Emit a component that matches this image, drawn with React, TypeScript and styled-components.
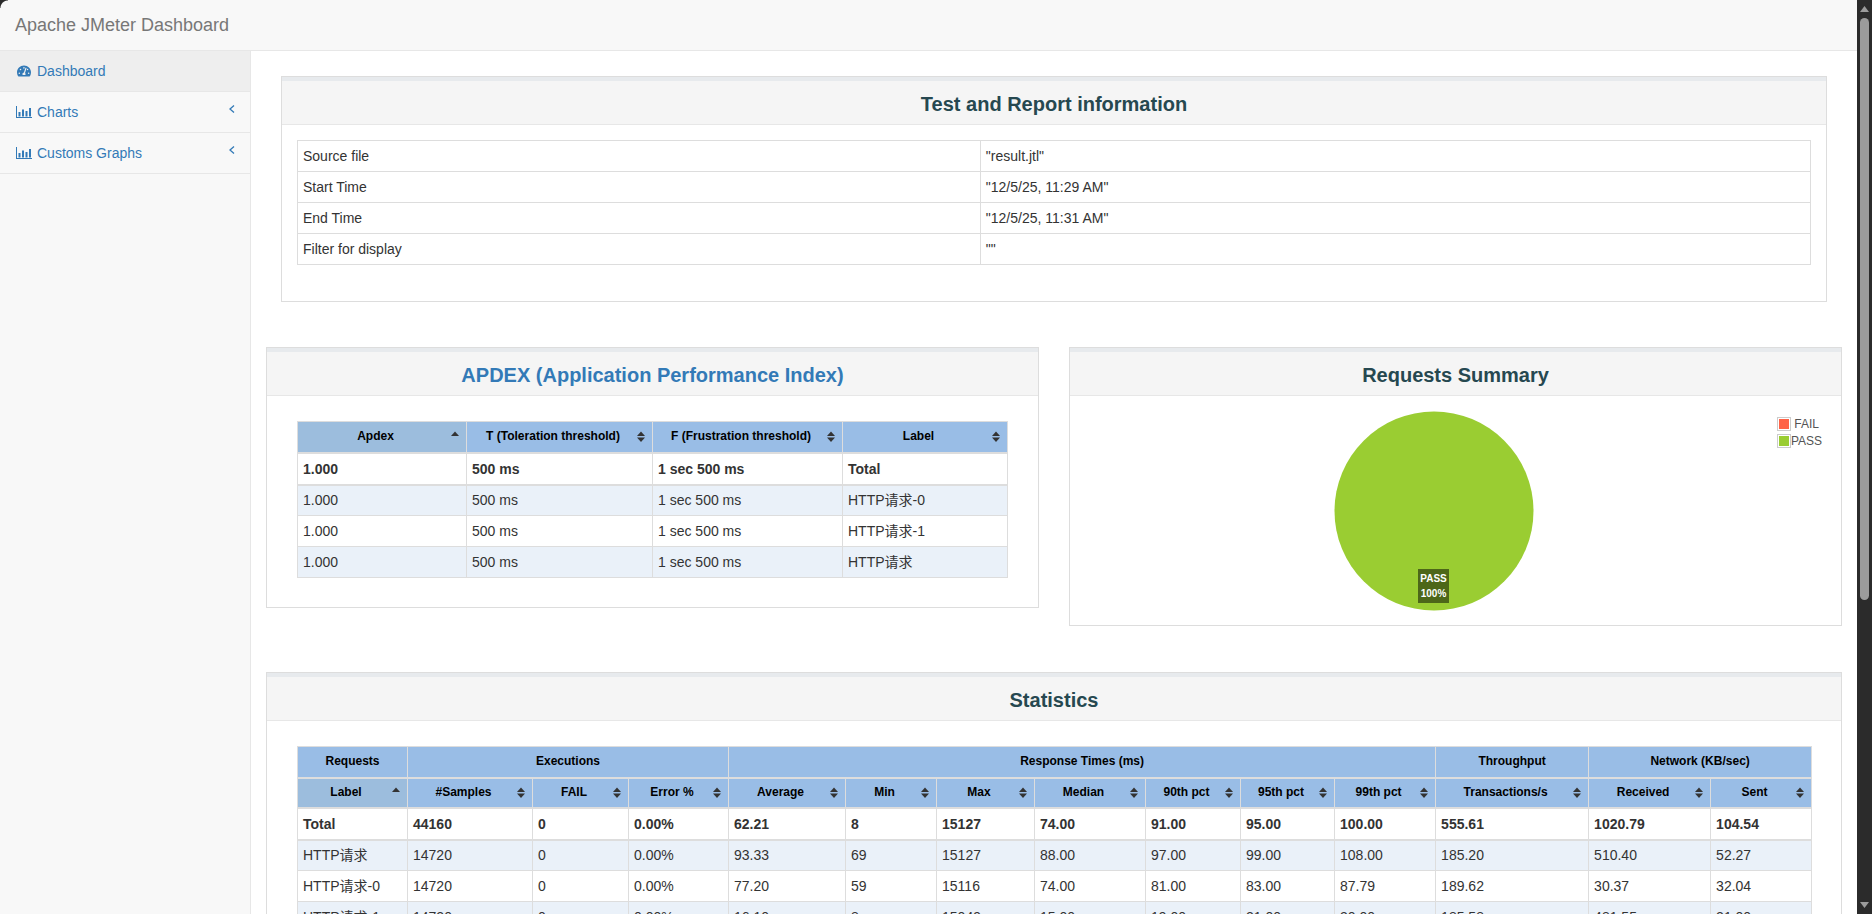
import React from "react";
import styled, { createGlobalStyle } from "styled-components";
import { FaTachometerAlt } from "react-icons/fa";

const Global = createGlobalStyle`
  html { overflow: hidden; }
  body {
    margin: 0;
    background: #fff;
    color: #333;
    font-family: "Liberation Sans", Arial, "Noto Sans CJK SC", sans-serif;
    font-size: 14px;
    line-height: 20px;
  }
  *, *::before, *::after { box-sizing: border-box; }
`;

const Page = styled.div`
  margin-right: 15px;
`;
const ScrollBar = styled.div`
  position: fixed;
  top: 0;
  right: 0;
  bottom: 0;
  width: 15px;
  background: #2b2b2b;
  display: flex;
  flex-direction: column;
  align-items: center;
  padding: 6px 0;
`;
const ScrollArrow = styled.svg`
  flex: none;
  width: 9px;
  height: 6px;
  fill: #9b9b9b;
`;
const ScrollThumb = styled.div`
  flex: none;
  width: 9px;
  height: 582px;
  margin: 6px 0 auto;
  background: #9b9b9b;
  border-radius: 5px;
`;
const Navbar = styled.header`
  position: relative;
  height: 51px;
  background: #f8f8f8;
  border-bottom: 1px solid #e7e7e7;
  display: flex;
  align-items: center;
  padding: 0 15px;
  &::before {
    content: "";
    position: absolute;
    left: 0;
    top: 0;
    width: 8px;
    height: 8px;
    background: radial-gradient(circle at 100% 100%, transparent 7px, #2b2b2b 8px);
  }
`;
const Brand = styled.div`
  color: #777;
  font-size: 18px;
`;
const Shell = styled.div`
  display: flex;
  align-items: stretch;
`;
const Sidebar = styled.nav`
  flex: 0 0 251px;
  background: #f8f8f8;
  border-right: 1px solid #e7e7e7;
`;
const NavItem = styled.a<{ $active?: boolean }>`
  display: flex;
  align-items: center;
  height: 41px;
  padding: 0 15px 0 16px;
  color: #337ab7;
  background: ${(p) => (p.$active ? "#eee" : "transparent")};
  border-bottom: 1px solid #e7e7e7;
`;
const NavIcon = styled.span`
  flex: 0 0 21px;
  display: flex;
  align-items: center;
`;
const GaugeIcon = styled(FaTachometerAlt)`
  margin-left: 1px;
`;
const NavLabel = styled.span`
  flex: 1;
`;
const Caret = styled.svg`
  flex: none;
  width: 6px;
  height: 8px;
  margin: -6px 0 0 0;
  fill: none;
  stroke: #337ab7;
  stroke-width: 1.3;
`;
const Main = styled.main`
  flex: 1;
  min-width: 0;
  padding: 25px 30px 0;
`;
const Row = styled.div`
  display: grid;
  grid-template-columns: 1fr 1fr;
  gap: 30px;
  margin: 0 -15px 1px;
  align-items: start;
`;
const Wide = styled.div`
  margin: 0 -15px;
`;
const Panel = styled.section`
  background: #fff;
  border: 1px solid #ddd;
  margin-bottom: 45px;
`;
const PanelHead = styled.div`
  background: #f5f5f5;
  border-top: 4px solid #e7eaed;
  border-bottom: 1px solid #e7e7e7;
  height: 48px;
  padding-top: 2px;
  display: flex;
  align-items: center;
  justify-content: center;
`;
const Title = styled.h3<{ $link?: boolean }>`
  margin: 0;
  font-size: 20px;
  line-height: 22px;
  font-weight: bold;
  color: ${(p) => (p.$link ? "#337ab7" : "#264850")};
`;
const PanelBody = styled.div<{ $pad: string }>`
  padding: ${(p) => p.$pad};
`;
const Table = styled.table`
  width: 100%;
  border-collapse: collapse;
  table-layout: fixed;
  border: 1px solid #ddd;
`;
const Th = styled.th<{ $sorted?: boolean; $sortable?: boolean; $h: number }>`
  position: relative;
  height: ${(p) => p.$h}px;
  padding: ${(p) => (p.$sortable ? "0 18px 0 5px" : "0 5px")};
  font-size: 12px;
  line-height: 17px;
  font-weight: bold;
  color: #000;
  text-align: center;
  white-space: nowrap;
  background: ${(p) => (p.$sorted ? "#9cbddd" : "#99bde6")};
  border: 1px solid #ddd;
  border-bottom-width: 2px;
`;
const SortMark = styled.svg`
  position: absolute;
  right: 7px;
  top: 50%;
  margin-top: -6px;
  width: 8px;
  height: 11px;
  fill: #333;
`;
const Tr = styled.tr<{ $zebra?: boolean; $total?: boolean }>`
  background: ${(p) => (p.$zebra ? "#eaf1f9" : "#fff")};
  font-weight: ${(p) => (p.$total ? "bold" : "normal")};
  & > td {
    height: ${(p) => (p.$total ? "32px" : "31px")};
    border-bottom-width: ${(p) => (p.$total ? "2px" : "1px")};
  }
`;
const Td = styled.td`
  padding: 0 5px;
  border: 1px solid #ddd;
  white-space: nowrap;
`;
const TrailingGap = styled.div`
  height: 21px;
`;
const Chart = styled.div`
  position: relative;
  height: 229px;
`;
const Pie = styled.svg`
  position: absolute;
  left: 263.5px;
  top: 15px;
  width: 200px;
  height: 200px;
`;
const PieLabel = styled.div`
  position: absolute;
  left: 348px;
  top: 173px;
  width: 31px;
  height: 34px;
  padding: 2px 0;
  background: #4d6719;
  color: #fff;
  font-size: 10px;
  font-weight: bold;
  line-height: 15px;
  text-align: center;
`;
const Legend = styled.table`
  position: absolute;
  left: 707px;
  top: 21px;
  border-collapse: collapse;
  font-size: 12px;
  line-height: 14px;
  color: #545454;
`;
const LegendSwatchCell = styled.td`
  padding: 0 0 3px;
  width: 14px;
`;
const Swatch = styled.div<{ $color: string }>`
  width: 14px;
  height: 14px;
  padding: 1px;
  border: 1px solid #ccc;
  &::after {
    content: "";
    display: block;
    width: 10px;
    height: 10px;
    background: ${(p) => p.$color};
  }
`;
const LegendText = styled.td`
  padding: 0 0 3px;
  text-align: center;
`;

const BarsIcon = () => (
  <svg width="16" height="14" viewBox="0 0 16 14" fill="#337ab7">
    <path d="M0 1h1v11h15v1H0z" />
    <rect x="2.5" y="7" width="2" height="4.5" />
    <rect x="6" y="4.5" width="2" height="7" />
    <rect x="9.5" y="6" width="2" height="5.5" />
    <rect x="13" y="3" width="2" height="8.5" />
  </svg>
);

const AngleLeft = () => (
  <Caret viewBox="0 0 6 8">
    <polyline points="5,0.5 1,4 5,7.5" />
  </Caret>
);

const Sort = ({ up }: { up?: boolean }) => (
  <SortMark viewBox="0 0 8 11">
    <path d="M4 0.5L8 5H0z" />
    {!up && <path d="M0 6.5H8L4 11z" />}
  </SortMark>
);

const info = [
  ["Source file", '"result.jtl"'],
  ["Start Time", '"12/5/25, 11:29 AM"'],
  ["End Time", '"12/5/25, 11:31 AM"'],
  ["Filter for display", '""'],
];

const apdexCols = [169, 186, 190, 165];
const apdexHead = ["Apdex", "T (Toleration threshold)", "F (Frustration threshold)", "Label"];
const apdexRows = [
  ["1.000", "500 ms", "1 sec 500 ms", "Total"],
  ["1.000", "500 ms", "1 sec 500 ms", "HTTP请求-0"],
  ["1.000", "500 ms", "1 sec 500 ms", "HTTP请求-1"],
  ["1.000", "500 ms", "1 sec 500 ms", "HTTP请求"],
];

const statCols = [110, 125, 96, 100, 117, 91, 98, 111, 95, 94, 101, 153, 122, 101];
const statGroups: [string, number][] = [
  ["Requests", 1],
  ["Executions", 3],
  ["Response Times (ms)", 7],
  ["Throughput", 1],
  ["Network (KB/sec)", 2],
];
const statHead = [
  "Label", "#Samples", "FAIL", "Error %", "Average", "Min", "Max", "Median",
  "90th pct", "95th pct", "99th pct", "Transactions/s", "Received", "Sent",
];
const statRows = [
  ["Total", "44160", "0", "0.00%", "62.21", "8", "15127", "74.00", "91.00", "95.00", "100.00", "555.61", "1020.79", "104.54"],
  ["HTTP请求", "14720", "0", "0.00%", "93.33", "69", "15127", "88.00", "97.00", "99.00", "108.00", "185.20", "510.40", "52.27"],
  ["HTTP请求-0", "14720", "0", "0.00%", "77.20", "59", "15116", "74.00", "81.00", "83.00", "87.79", "189.62", "30.37", "32.04"],
  ["HTTP请求-1", "14720", "0", "0.00%", "16.10", "8", "15049", "15.00", "19.00", "21.00", "30.00", "185.58", "481.55", "21.00"],
];

export default function App() {
  return (
    <>
      <Global />
      <Page>
        <Navbar>
          <Brand>Apache JMeter Dashboard</Brand>
        </Navbar>
        <Shell>
          <Sidebar>
            <NavItem $active>
              <NavIcon>
                <GaugeIcon size={14} />
              </NavIcon>
              <NavLabel>Dashboard</NavLabel>
            </NavItem>
            <NavItem>
              <NavIcon>
                <BarsIcon />
              </NavIcon>
              <NavLabel>Charts</NavLabel>
              <AngleLeft />
            </NavItem>
            <NavItem>
              <NavIcon>
                <BarsIcon />
              </NavIcon>
              <NavLabel>Customs Graphs</NavLabel>
              <AngleLeft />
            </NavItem>
          </Sidebar>
          <Main>
            <Panel>
              <PanelHead>
                <Title>Test and Report information</Title>
              </PanelHead>
              <PanelBody $pad="15px">
                <Table>
                  <colgroup>
                    <col style={{ width: "45.13%" }} />
                    <col />
                  </colgroup>
                  <tbody>
                    {info.map(([k, v]) => (
                      <Tr key={k}>
                        <Td>{k}</Td>
                        <Td>{v}</Td>
                      </Tr>
                    ))}
                  </tbody>
                </Table>
                <TrailingGap />
              </PanelBody>
            </Panel>
            <Row>
              <Panel>
                <PanelHead>
                  <Title $link>APDEX (Application Performance Index)</Title>
                </PanelHead>
                <PanelBody $pad="25px 30px 29px">
                  <Table>
                    <colgroup>
                      {apdexCols.map((w, i) => (
                        <col key={i} style={{ width: w }} />
                      ))}
                    </colgroup>
                    <thead>
                      <tr>
                        {apdexHead.map((h, i) => (
                          <Th key={h} $h={31} $sortable $sorted={i === 0}>
                            {h}
                            <Sort up={i === 0} />
                          </Th>
                        ))}
                      </tr>
                    </thead>
                    <tbody>
                      {apdexRows.map((r, i) => (
                        <Tr key={i} $total={i === 0} $zebra={i % 2 === 1}>
                          {r.map((c, j) => (
                            <Td key={j}>{c}</Td>
                          ))}
                        </Tr>
                      ))}
                    </tbody>
                  </Table>
                </PanelBody>
              </Panel>
              <Panel>
                <PanelHead>
                  <Title>Requests Summary</Title>
                </PanelHead>
                <Chart>
                  <Pie viewBox="0 0 200 200">
                    <circle cx="100" cy="100" r="99.5" fill="#9acd32" />
                  </Pie>
                  <PieLabel>
                    PASS
                    <br />
                    100%
                  </PieLabel>
                  <Legend>
                    <tbody>
                      <tr>
                        <LegendSwatchCell>
                          <Swatch $color="#ff6347" />
                        </LegendSwatchCell>
                        <LegendText>FAIL</LegendText>
                      </tr>
                      <tr>
                        <LegendSwatchCell>
                          <Swatch $color="#9acd32" />
                        </LegendSwatchCell>
                        <LegendText>PASS</LegendText>
                      </tr>
                    </tbody>
                  </Legend>
                </Chart>
              </Panel>
            </Row>
            <Wide>
              <Panel>
                <PanelHead>
                  <Title>Statistics</Title>
                </PanelHead>
                <PanelBody $pad="25px 30px 29px">
                  <Table>
                    <colgroup>
                      {statCols.map((w, i) => (
                        <col key={i} style={{ width: w }} />
                      ))}
                    </colgroup>
                    <thead>
                      <tr>
                        {statGroups.map(([g, n]) => (
                          <Th key={g} $h={31} colSpan={n}>
                            {g}
                          </Th>
                        ))}
                      </tr>
                      <tr>
                        {statHead.map((h, i) => (
                          <Th key={h} $h={30} $sortable $sorted={i === 0}>
                            {h}
                            <Sort up={i === 0} />
                          </Th>
                        ))}
                      </tr>
                    </thead>
                    <tbody>
                      {statRows.map((r, i) => (
                        <Tr key={i} $total={i === 0} $zebra={i % 2 === 1}>
                          {r.map((c, j) => (
                            <Td key={j}>{c}</Td>
                          ))}
                        </Tr>
                      ))}
                    </tbody>
                  </Table>
                </PanelBody>
              </Panel>
            </Wide>
          </Main>
        </Shell>
      </Page>
      <ScrollBar>
        <ScrollArrow viewBox="0 0 9 6">
          <path d="M4.5 0L9 6H0z" />
        </ScrollArrow>
        <ScrollThumb />
        <ScrollArrow viewBox="0 0 9 6">
          <path d="M0 0H9L4.5 6z" />
        </ScrollArrow>
      </ScrollBar>
    </>
  );
}
